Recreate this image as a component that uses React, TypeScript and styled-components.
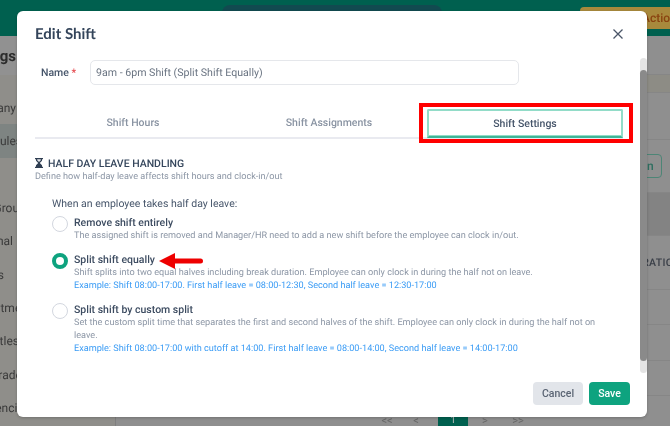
import React from "react";
import styled, { createGlobalStyle } from "styled-components";

const Global = createGlobalStyle`
  html, body { margin: 0; padding: 0; width: 670px; height: 426px; overflow: hidden; background: #8f8f8f; }
  * { box-sizing: border-box; }
  body { font-family: Roboto, "Liberation Sans", sans-serif; text-rendering: geometricPrecision; }
`;

const Page = styled.div`
  position: relative; width: 670px; height: 426px; overflow: hidden; background: #8e8e8e;
  display: flex; flex-direction: column; color: #333; filter: blur(0.3px);
`;
const TopBar = styled.div`
  height: 36px; flex: none; background: #00604f; position: relative; overflow: hidden;
`;
const SearchPill = styled.div`
  position: absolute; left: 222px; top: 5px; width: 220px; height: 30px; border-radius: 8px; background: #124a50;
`;
const ActionPill = styled.div`
  position: absolute; left: 580px; top: 7px; width: 100px; height: 22px; border-radius: 4px; background: #a8893c;
  color: #8a4310; font-size: 12px; font-weight: 500; padding-left: 62px; line-height: 22px; white-space: nowrap; overflow: hidden;
`;
const Under = styled.div`display: flex; flex: 1; min-height: 0;`;
const Sidebar = styled.div`
  width: 116px; flex: none; background: #8f8e8a; border-right: 1px solid #7f7f7f; display: flex; flex-direction: column;
`;
const SideTitle = styled.div`
  height: 39px; flex: none; display: flex; align-items: center; justify-content: flex-end; padding-right: 99px; margin-bottom: 16px;
  font-size: 15px; font-weight: 700; background: #919191; white-space: nowrap; color: #2c2c2c;
`;
const SideItem = styled.div<{ $active?: boolean; $end: number }>`
  height: 33.4px; flex: none; display: flex; align-items: center; justify-content: flex-end; padding-right: ${p => 116 - p.$end}px;
  font-size: 12px; white-space: nowrap; background: ${p => (p.$active ? "#7e8482" : "transparent")}; color: #3a3a3a;
`;
const Main = styled.div`flex: 1; display: flex; flex-direction: column; background: #8f8f8f;`;
const Band = styled.div<{ $height: number; $bg: string }>`
  height: ${p => p.$height}px; flex: none; background: ${p => p.$bg}; border-bottom: 1px solid #868686;
  display: flex; align-items: center; justify-content: flex-end; font-size: 11px; color: #333; overflow: hidden;
`;
const GhostButton = styled.div`
  width: 40px; height: 24px; border: 1px solid #4d8576; border-radius: 4px; color: #2f6f60; margin-right: 8px;
  font-size: 12px; font-weight: 500; display: flex; align-items: center; padding-left: 24px;
`;
const HeadCell = styled.span`font-weight: 500; font-size: 10.5px; white-space: nowrap; margin-right: -11px; color: #3a3f48; letter-spacing: .3px; flex: none;`;
const Pager = styled.div`
  position: absolute; left: 380px; top: 417px; display: flex; align-items: flex-start; font-size: 11px; color: #666; height: 9px;
`;
const PagerItem = styled.span<{ $w: number }>`width: ${p => p.$w}px; text-align: center; line-height: 8px;`;
const PagerActive = styled.span`
  width: 30px; height: 9px; background: #00604f; color: #bbb; text-align: center; line-height: 8px; font-size: 10px;
`;

const Modal = styled.div`
  position: absolute; left: 17px; top: 11px; width: 630px; height: 406px; background: #fff; border-radius: 6px;
  display: flex; flex-direction: column; padding: 0 18px; box-shadow: 0 1px 3px rgba(0,0,0,.2);
`;
const Header = styled.div`
  height: 45px; flex: none; display: flex; align-items: center; justify-content: space-between;
`;
const Title = styled.h2`
  margin: 0; font-family: Lato, Roboto, sans-serif; font-size: 15px; font-weight: 700; color: #33445a;
`;
const Close = styled.button`
  border: 0; background: none; padding: 0; width: 12px; height: 12px; display: flex; margin-right: 5px;
`;
const NameRow = styled.div`display: flex; align-items: center; margin-top: 4px; flex: none;`;
const NameLabel = styled.label`
  width: 54.5px; padding-left: 6px; font-size: 10.5px; font-weight: 500; color: #46556a; white-space: nowrap;
`;
const Req = styled.span`color: #e5484d;`;
const NameInput = styled.div`
  width: 429px; height: 25px; border: 1px solid #e5e7eb; border-radius: 5px; padding: 0 5.5px;
  display: flex; align-items: center; font-size: 10.62px; color: #6a7482;
`;
const Tabs = styled.div`
  margin-top: 22px; height: 32px; flex: none; display: flex; border-bottom: 2px solid #e9eaf0; width: 588px;
`;
const Tab = styled.div`
  width: 196px; display: flex; align-items: center; justify-content: center; font-size: 10.5px; font-weight: 500;
  color: #8a94a3;
`;
const ActiveTab = styled.div`
  width: 196px; height: 29px; margin-top: 2px; display: flex; align-items: center; justify-content: center;
  font-size: 10.5px; font-weight: 500; color: #46556a;
  border: 2px solid #92dcc8; border-bottom: 2px solid #3fb597; box-shadow: inset 0 -1px 0 #92dcc8; border-radius: 2px 2px 0 0; background: #fff;
`;
const Highlight = styled.div`
  position: absolute; left: 402px; top: 92px; width: 214px; height: 40px; border: 4px solid #ff0000; pointer-events: none;
`;
const Section = styled.div`margin-top: 17px; flex: none;`;
const SectionTitle = styled.div`
  display: flex; align-items: center; gap: 5px; font-size: 10.5px; font-weight: 500; color: #35465c; height: 14px;
`;
const SectionHint = styled.div`
  margin-top: 1px; font-size: 9.13px; color: #8d97a6; line-height: 13px;
`;
const Question = styled.div`
  margin: 13px 0 0 17px; font-size: 10.5px; color: #46556a; line-height: 14px;
`;
const Options = styled.div`margin: 5.2px 0 0 17px; display: flex; flex-direction: column; gap: 9.3px; width: 556px;`;
const Option = styled.div`display: flex; gap: 6px; align-items: flex-start;`;
const Radio = styled.span<{ $on?: boolean }>`
  flex: none; width: 16px; height: 16px; border-radius: 50%; background: #fff;
  border: ${p => (p.$on ? "4.500px solid #0ea37f" : "1px solid #d3d7df")};
`;
const OptionBody = styled.div`flex: 1; min-width: 0; position: relative;`;
const OptionTitle = styled.div`
  font-size: 10.5px; font-weight: 500; color: #3d4c61; line-height: 14px;
`;
const OptionDesc = styled.div`
  font-size: 9.13px; color: #8d97a6; line-height: 13.3px;
`;
const OptionExample = styled.div`
  font-size: 9.13px; color: #3b9cf5; line-height: 13.3px;
`;
const ArrowMark = styled.svg`
  position: absolute; left: 85px; top: 0; width: 44px; height: 16px;
`;
const Track = styled.div`
  position: absolute; right: 0; top: 47px; width: 7px; height: 315px; border-radius: 4px; background: #e4e4e4;
`;
const Thumb = styled.div`
  position: absolute; left: 0; top: 12px; width: 7px; height: 291px; border-radius: 4px; background: #8a8a8a;
`;
const Footer = styled.div`
  margin-top: auto; margin-bottom: 12px; flex: none; display: flex; justify-content: flex-end; gap: 6px; margin-right: -1px;
`;
const Btn = styled.button<{ $primary?: boolean }>`
  height: 23px; border: 0; border-radius: 4px; padding: 0; font: 500 10.5px Roboto, sans-serif;
  width: ${p => (p.$primary ? 41 : 50)}px;
  background: ${p => (p.$primary ? "#0ea37f" : "#e2e5ea")}; color: ${p => (p.$primary ? "#fff" : "#5b6574")};
`;

export default function App() {
  return (
    <Page>
      <Global />
      <TopBar>
        <SearchPill />
        <ActionPill>Actions</ActionPill>
      </TopBar>
      <Under>
        <Sidebar>
          <SideTitle>Settings</SideTitle>
          <SideItem $end={17}>Company</SideItem>
          <SideItem $active $end={23}>Schedules</SideItem>
          <SideItem $end={17} />
          <SideItem $end={33}>Work Groups</SideItem>
          <SideItem $end={14}>Personal</SideItem>
          <SideItem $end={5}>Tiles</SideItem>
          <SideItem $end={39}>Departments</SideItem>
          <SideItem $end={20}>Job Titles</SideItem>
          <SideItem $end={29}>Job Grades</SideItem>
          <SideItem $end={31}>Agencies</SideItem>
        </Sidebar>
        <Main>
          <Band $height={39} $bg="#8f8f8f" />
          <Band $height={18} $bg="#8d8c85" />
          <Band $height={47} $bg="#8f8f8f" />
          <Band $height={53} $bg="#8f8f8f"><GhostButton>n</GhostButton></Band>
          <Band $height={43} $bg="#838383" />
          <Band $height={54} $bg="#8f8f8f"><HeadCell>DURATION</HeadCell></Band>
          <Band $height={35} $bg="#8f8f8f" />
          <Band $height={36} $bg="#8f8f8f" />
          <Band $height={35} $bg="#8f8f8f" />
        </Main>
      </Under>
      <Pager>
        <PagerItem $w={14}>&lt;&lt;</PagerItem>
        <PagerItem $w={44}>&lt;</PagerItem>
        <PagerActive>1</PagerActive>
        <PagerItem $w={34}>&gt;</PagerItem>
        <PagerItem $w={32}>&gt;&gt;</PagerItem>
      </Pager>
      <Modal>
        <Header>
          <Title>Edit Shift</Title>
          <Close aria-label="Close">
            <svg width="12" height="12" viewBox="0 0 12 12" fill="none" stroke="#4a5568" strokeWidth="1.3"><path d="M1.500 1.500 10.500 10.500M10.500 1.500 1.500 10.500" /></svg>
          </Close>
        </Header>
        <NameRow>
          <NameLabel>Name <Req>*</Req></NameLabel>
          <NameInput>9am - 6pm Shift (Split Shift Equally)</NameInput>
        </NameRow>
        <Tabs>
          <Tab>Shift Hours</Tab>
          <Tab>Shift Assignments</Tab>
          <ActiveTab>Shift Settings</ActiveTab>
        </Tabs>
        <Section>
          <SectionTitle>
            <svg width="8" height="10" viewBox="0 0 8 10"><path d="M0 0h8v1.300H7v1.400L4.800 5 7 7.300V8.700h1V10H0V8.700h1V7.300L3.200 5 1 2.700V1.300H0z" fill="#2f3e52" /><path d="M2.200 1.300h3.600v.9L4 4 2.200 2.200z" fill="#fff" opacity=".85" /></svg>
            HALF DAY LEAVE HANDLING
          </SectionTitle>
          <SectionHint>Define how half-day leave affects shift hours and clock-in/out</SectionHint>
          <Question>When an employee takes half day leave:</Question>
          <Options>
            <Option>
              <Radio />
              <OptionBody>
                <OptionTitle>Remove shift entirely</OptionTitle>
                <OptionDesc>The assigned shift is removed and Manager/HR need to add a new shift before the employee can clock in/out.</OptionDesc>
              </OptionBody>
            </Option>
            <Option>
              <Radio $on />
              <OptionBody>
                <OptionTitle>Split shift equally</OptionTitle>
                <OptionDesc>Shift splits into two equal halves including break duration. Employee can only clock in during the half not on leave.</OptionDesc>
                <OptionExample>Example: Shift 08:00-17:00. First half leave = 08:00-12:30, Second half leave = 12:30-17:00</OptionExample>
                <ArrowMark viewBox="0 0 44 16"><path d="M0 8 16 0V5.500H41.500a2.500 2.500 0 0 1 0 5H16V16z" fill="#ee0000" /></ArrowMark>
              </OptionBody>
            </Option>
            <Option>
              <Radio />
              <OptionBody>
                <OptionTitle>Split shift by custom split</OptionTitle>
                <OptionDesc>Set the custom split time that separates the first and second halves of the shift. Employee can only clock in during the half not on leave.</OptionDesc>
                <OptionExample>Example: Shift 08:00-17:00 with cutoff at 14:00. First half leave = 08:00-14:00, Second half leave = 14:00-17:00</OptionExample>
              </OptionBody>
            </Option>
          </Options>
        </Section>
        <Footer>
          <Btn>Cancel</Btn>
          <Btn $primary>Save</Btn>
        </Footer>
        <Highlight />
        <Track><Thumb /></Track>
      </Modal>
    </Page>
  );
}
